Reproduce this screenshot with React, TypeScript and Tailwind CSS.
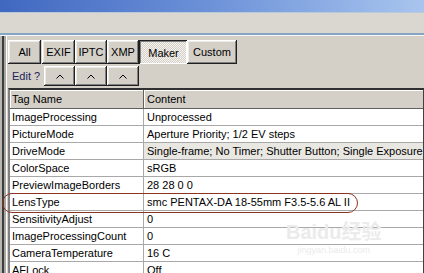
import React from "react";

const rows: [string, string][] = [
  ["ImageProcessing", "Unprocessed"],
  ["PictureMode", "Aperture Priority; 1/2 EV steps"],
  ["DriveMode", "Single-frame; No Timer; Shutter Button; Single Exposure"],
  ["ColorSpace", "sRGB"],
  ["PreviewImageBorders", "28 28 0 0"],
  ["LensType", "smc PENTAX-DA 18-55mm F3.5-5.6 AL II"],
  ["SensitivityAdjust", "0"],
  ["ImageProcessingCount", "0"],
  ["CameraTemperature", "16 C"],
  ["AFLock", "Off"],
];

const raised =
  "shadow-[inset_-1px_-1px_#202020,inset_1px_1px_#ffffff,inset_-2px_-2px_#808080,inset_2px_2px_#ecebe6] bg-[#d4d0c8]";
const pressed =
  "shadow-[inset_1px_1px_#202020,inset_-1px_-1px_#ffffff,inset_2px_2px_#808080] bg-[image:repeating-conic-gradient(#f4f3ef_0_25%,#d4d0c8_0_50%)] [background-size:2px_2px]";

function Tab({ label, w, active, className = "" }: { label: string; w: string; active?: boolean; className?: string }) {
  return (
    <div
      className={`${w} h-[24px] shrink-0 flex items-center justify-center text-[11px] text-black ${
        active ? pressed + " pt-[2px] pl-[1px]" : raised
      } ${className}`}
    >
      {label}
    </div>
  );
}

function Caret() {
  return (
    <svg width="8" height="5" viewBox="0 0 8 5">
      <polyline points="0.5,4.5 4,1 7.5,4.5" fill="none" stroke="#000" strokeWidth="1" />
    </svg>
  );
}

function SmallBtn({ w }: { w: string }) {
  return (
    <div className={`${w} h-[20px] shrink-0 flex items-center justify-center ${raised}`}>
      <Caret />
    </div>
  );
}

export default function App() {
  return (
    <div className="relative w-[424px] h-[273px] overflow-hidden bg-[#d4d0c8] flex flex-col font-['Liberation_Sans',Arial,sans-serif]">
      <div className="h-[12px] shrink-0 bg-linear-to-r from-[#4068c0] via-[#6d92d8] to-[#a9c5ee]" />
      <div className="h-[1px] shrink-0 bg-[#b9c8dc]" />
      <div className="h-[20px] shrink-0 bg-[#dad7d0]" />
      <div className="h-[2px] shrink-0 bg-[#86a6c4]" />
      <div className="h-[1px] shrink-0 bg-[#f4f6f8]" />
      <div className="flex-1 shrink-0 flex min-h-0">
        <div className="w-[8px] shrink-0 flex">
          <div className="w-[2px] bg-[#b8b6b0]" />
          <div className="w-[2px] bg-[#3c3c3c]" />
          <div className="w-[2px] bg-[#a8a6a0]" />
          <div className="w-[1px] bg-white" />
          <div className="w-[1px] bg-[#d4d0c8]" />
        </div>
        <div className="flex-1 flex flex-col min-h-0">
          <div className="mt-[4px] flex shrink-0">
            <Tab label="All" w="w-[33px]" />
            <Tab label="EXIF" w="w-[33px]" className="ml-[1px]" />
            <Tab label="IPTC" w="w-[32px]" />
            <Tab label="XMP" w="w-[32px]" />
            <Tab label="Maker" w="w-[48px]" active />
            <Tab label="Custom" w="w-[50px]" />
          </div>
          <div className="mt-[2px] flex h-[20px] shrink-0">
            <div className="w-[36px] h-[20px] flex items-center pl-[4px] text-[11px] text-[#1c2458]">Edit ?</div>
            <SmallBtn w="w-[31px]" />
            <SmallBtn w="w-[32px]" />
            <SmallBtn w="w-[32px]" />
          </div>
          <div className="mt-[2px] mr-[1px] flex-1 min-h-0 shrink-0 border-t-2 border-t-[#303030] border-l-2 border-l-[#808080] border-r-2 border-r-[#404040] bg-white">
            <div className="h-[19px] shrink-0 flex bg-[#d4d0c8] border-b border-b-[#606060] text-[11px] text-black">
              <div className="w-[134px] flex items-center pl-[2px] border-r border-r-[#606060] shadow-[inset_1px_1px_#ffffff]">Tag Name</div>
              <div className="flex-1 flex items-center pl-[3px] shadow-[inset_1px_1px_#ffffff]">Content</div>
            </div>
            {rows.map(([name, value]) => (
              <div key={name} className="h-[17px] shrink-0 flex border-b border-b-[#a8a8a8] text-[11px] text-black whitespace-nowrap">
                <div className="w-[134px] flex items-center pl-[2px] border-r border-r-[#a8a8a8]">{name}</div>
                <div className={`flex-1 flex items-center pl-[3px] overflow-hidden ${name === "DriveMode" ? "bg-[#e9e7e2]" : ""}`}>
                  {value}
                </div>
              </div>
            ))}
          </div>
        </div>
      </div>
      <div className="absolute left-[2px] top-[193px] w-[356px] h-[20px] rounded-[10px] border-[1.5px] border-[#8a3424]" />
      <div className="absolute left-[286px] top-[220px] flex flex-col items-center text-[#ebebeb] pointer-events-none">
        <div className="text-[20px] font-bold leading-[24px] font-['Liberation_Sans',Arial,'Noto_Sans_CJK_SC',sans-serif]">Baidu经验</div>
        <div className="text-[9px] leading-[12px]">jingyan.baidu.com</div>
      </div>
    </div>
  );
}
